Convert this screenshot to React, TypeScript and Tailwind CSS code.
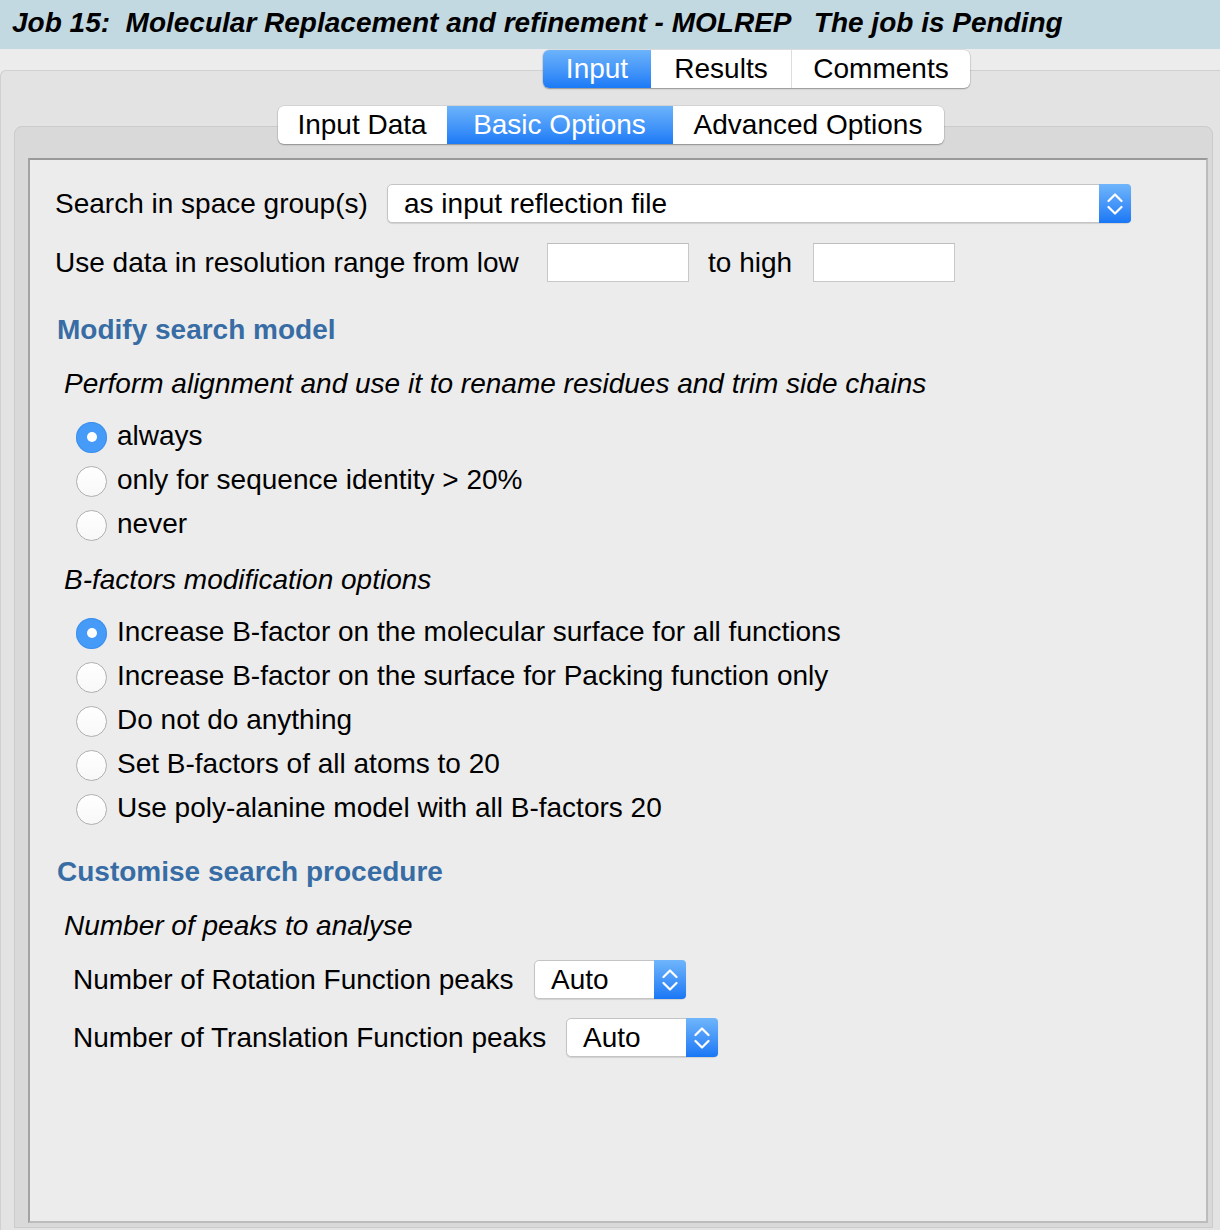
import React from "react";

const Chevrons = () => (
  <svg width="16" height="24" viewBox="0 0 16 24" fill="none" stroke="white" strokeWidth="2.2" strokeLinecap="round" strokeLinejoin="round">
    <polyline points="1.5,9 8,2.5 14.5,9" />
    <polyline points="1.5,15 8,21.5 14.5,15" />
  </svg>
);

function Select({ value, className }: { value: string; className: string }) {
  return (
    <div className={"flex h-[39px] rounded-[5px] border border-[#c4c4c4] bg-white shadow-[0_1px_1px_rgba(0,0,0,0.12)] " + className}>
      <div className="flex flex-1 items-center pl-[16px]">{value}</div>
      <div className="flex w-[32px] items-center justify-center rounded-r-[4px] bg-linear-to-b from-[#6fb5fb] to-[#1877f5] -my-px -mr-px">
        <Chevrons />
      </div>
    </div>
  );
}

function Radio({ label, checked }: { label: string; checked?: boolean }) {
  return (
    <div className="flex h-[44px] items-center">
      {checked ? (
        <div className="mt-[2px] flex h-[31px] w-[31px] items-center justify-center rounded-full bg-[#459bf7] shadow-[inset_0_0_0_1px_rgba(40,120,220,0.35)]">
          <div className="h-[10px] w-[10px] rounded-full bg-white" />
        </div>
      ) : (
        <div className="mt-[2px] h-[31px] w-[31px] rounded-full border border-[#b0b0b0] bg-linear-to-b from-white to-[#f8f8f8]" />
      )}
      <span className="ml-[10px]">{label}</span>
    </div>
  );
}

const TextInput = () => <div className="h-[39px] w-[142px] border border-[#c8c8c8] border-t-[#bdbdbd] bg-white" />;

export default function App() {
  return (
    <div className="h-[1230px] w-[1220px] overflow-hidden bg-[#ececec] font-['Liberation_Sans',Arial,sans-serif] text-[28px] leading-[34px] text-black">
      <div className="flex h-[49px] items-center bg-[#c3d9e1] pb-[4px] pl-[12px]">
        <span className="whitespace-pre font-bold italic">Job 15:  Molecular Replacement and refinement - MOLREP   The job is Pending</span>
      </div>
      <div className="pt-[1px]">
        <div className="relative z-10 flex pl-[543px]">
          <div className="flex h-[38px] overflow-hidden rounded-[6px] bg-white shadow-[0_0_0_0.5px_rgba(0,0,0,0.12),0_1px_1.5px_rgba(0,0,0,0.3)]">
            <div className="flex w-[108px] items-center justify-center bg-linear-to-b from-[#6cb3fb] to-[#1a7af6] text-white">Input</div>
            <div className="flex w-[141px] items-center justify-center border-r border-[#dddddd]">Results</div>
            <div className="flex w-[178px] items-center justify-center">Comments</div>
          </div>
        </div>
        <div className="-mt-[18px] h-[1200px] rounded-tl-[6px] border-l border-t border-[#d0d0d0] bg-[#e3e3e3] pt-[35px]">
          <div className="relative z-10 flex justify-center">
            <div className="flex h-[38px] overflow-hidden rounded-[6px] bg-white shadow-[0_0_0_0.5px_rgba(0,0,0,0.12),0_1px_1.5px_rgba(0,0,0,0.3)]">
              <div className="flex w-[169px] items-center justify-center">Input Data</div>
              <div className="flex w-[226px] items-center justify-center bg-linear-to-b from-[#6cb3fb] to-[#1a7af6] text-white">Basic Options</div>
              <div className="flex w-[271px] items-center justify-center">Advanced Options</div>
            </div>
          </div>
          <div className="-mt-[18px] ml-[13px] h-[1102px] w-[1199px] rounded-t-[8px] border border-[#cbcbcb] bg-[#d9d9d9] pt-[31px]">
            <div className="ml-[13px] h-[1065px] w-[1180px] border-2 border-b-[#bcbcbc] border-l-[#a3a3a3] border-r-[#bcbcbc] border-t-[#999999] bg-[#ececec] pl-[25px] pt-[24px]">
              <div className="flex h-[39px] items-center">
                <span className="w-[332px]">Search in space group(s)</span>
                <Select value="as input reflection file" className="w-[744px]" />
              </div>
              <div className="mt-[20px] flex h-[39px] items-center">
                <span className="w-[492px]">Use data in resolution range from low</span>
                <TextInput />
                <span className="ml-[19px] w-[105px]">to high</span>
                <TextInput />
              </div>
              <div className="ml-[2px] mt-[31px] font-bold text-[#386ca4]">Modify search model</div>
              <div className="ml-[9px] mt-[20px] italic">Perform alignment and use it to rename residues and trim side chains</div>
              <div className="ml-[21px] mt-[13px]">
                <Radio label="always" checked />
                <Radio label="only for sequence identity > 20%" />
                <Radio label="never" />
              </div>
              <div className="ml-[9px] mt-[17px] italic">B-factors modification options</div>
              <div className="ml-[21px] mt-[13px]">
                <Radio label="Increase B-factor on the molecular surface for all functions" checked />
                <Radio label="Increase B-factor on the surface for Packing function only" />
                <Radio label="Do not do anything" />
                <Radio label="Set B-factors of all atoms to 20" />
                <Radio label="Use poly-alanine model with all B-factors 20" />
              </div>
              <div className="ml-[2px] mt-[25px] font-bold text-[#386ca4]">Customise search procedure</div>
              <div className="ml-[9px] mt-[20px] italic">Number of peaks to analyse</div>
              <div className="ml-[18px] mt-[17px] flex h-[39px] items-center">
                <span className="w-[461px]">Number of Rotation Function peaks</span>
                <Select value="Auto" className="w-[152px]" />
              </div>
              <div className="ml-[18px] mt-[19px] flex h-[39px] items-center">
                <span className="w-[493px]">Number of Translation Function peaks</span>
                <Select value="Auto" className="w-[152px]" />
              </div>
            </div>
          </div>
        </div>
      </div>
    </div>
  );
}
